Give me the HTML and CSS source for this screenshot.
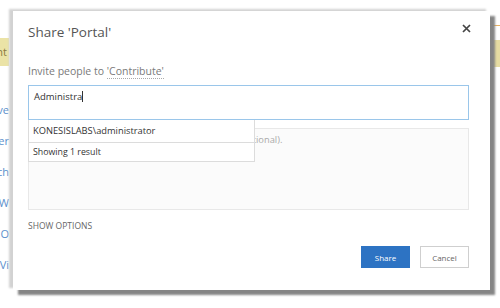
FILE: index.html
```html
<!DOCTYPE html>
<html lang="en">
<head>
    <meta charset="UTF-8">
    <title>Share 'Portal'</title>
    <link rel="stylesheet" href="styles.css">
</head>
<body>

    <div class="screen">
        <div class="page-strip left-strip">
            <div class="page-nav">
                <div class="status-bar">Content</div>
                <a href="#">Remove</a>
                <a href="#">Number</a>
                <a href="#">Search</a>
                <a href="#">New W</a>
                <a href="#">Site O</a>
                <a href="#">Vi</a>
            </div>
        </div>

        <div class="dialog">
            <div class="dialog-header">
                <h1>Share 'Portal'</h1>
                <span class="close">
                    <svg width="9" height="9" viewBox="0 0 9 9"><path d="M1 1 L8 8 M8 1 L1 8" stroke="#444" stroke-width="1.7" fill="none"/></svg>
                </span>
            </div>

            <p class="invite">Invite people to <span class="perm">'Contribute'</span></p>

            <div class="picker">
                <div class="people-input">Administra<span class="caret"></span></div>
                <ul class="suggestions">
                    <li class="match">KONESISLABS\administrator</li>
                    <li class="count">Showing 1 result</li>
                </ul>
                <div class="message">Include a personal message with this invitation (optional).</div>
            </div>

            <a class="show-options" href="#">SHOW OPTIONS</a>

            <div class="dialog-buttons">
                <button class="btn-share">Share</button>
                <button class="btn-cancel">Cancel</button>
            </div>
        </div>

        <div class="page-strip right-strip">
            <div class="top-line"></div>
            <div class="status-bar"></div>
        </div>
    </div>

</body>
</html>
```

FILE: styles.css
```css
body {
    margin: 0;
    padding: 0;
    background-color: #ffffff;
    font-family: "Open Sans", Arial, sans-serif;
}

.screen {
    display: flex;
    width: 500px;
    height: 308px;
    overflow: hidden;
}

.page-strip {
    flex: none;
    overflow: hidden;
}

.left-strip {
    width: 13px;
}

.page-nav {
    width: 80px;
    margin-left: -71px;
    padding-top: 38px;
    text-align: right;
    white-space: nowrap;
}

.page-nav .status-bar {
    background: #ebe3a6;
    color: #8a7a40;
    height: 28px;
    line-height: 28px;
    font-size: 11px;
    padding-right: 2px;
    margin-bottom: 37px;
}

.page-nav a {
    display: block;
    color: #5a8fcc;
    text-decoration: none;
    font-size: 11px;
    height: 31px;
    line-height: 14px;
}

.right-strip {
    width: 10px;
}

.right-strip .top-line {
    height: 1px;
    margin-top: 25px;
    background: #e8b060;
}

.right-strip .status-bar {
    height: 27px;
    margin-top: 14px;
    background: #e6dca2;
}

.dialog {
    flex: none;
    width: 477px;
    height: 279px;
    margin-top: 11px;
    padding: 12px 21px 0 15px;
    box-sizing: border-box;
    background: #ffffff;
    display: flex;
    flex-direction: column;
    box-shadow: -4px -2px 2px #d2d2d2, 5px 5px 2px #858585;
    position: relative;
    z-index: 1;
}

.dialog-header {
    display: flex;
    justify-content: space-between;
    align-items: flex-start;
}

.dialog-header h1 {
    margin: 0;
    font-size: 13.5px;
    line-height: 18px;
    font-weight: 400;
    color: #555;
}

.close {
    margin-top: 1px;
    margin-right: -2px;
    line-height: 0;
}

.invite {
    margin: 23px 0 7px;
    font-size: 10.5px;
    line-height: 14px;
    color: #7a7a7a;
}

.perm {
    border-bottom: 1px dotted #aaa;
}

.picker {
    position: relative;
}

.people-input {
    height: 35px;
    border: 1px solid #9ac6ea;
    box-sizing: border-box;
    padding: 4px 5px;
    font-size: 9.5px;
    line-height: 14px;
    color: #333;
}

.caret {
    display: inline-block;
    width: 1px;
    height: 11px;
    background: #333;
    vertical-align: -2px;
}

.suggestions {
    position: absolute;
    top: 35px;
    left: 0;
    width: 225px;
    margin: 0;
    padding: 0;
    list-style: none;
    background: #ffffff;
    border: 1px solid #dcdcdc;
    border-top: none;
    z-index: 2;
}

.suggestions li {
    padding: 0 4px;
    font-size: 9.3px;
    color: #333;
}

.suggestions .match {
    height: 22px;
    line-height: 22px;
    border-bottom: 1px solid #dcdcdc;
}

.suggestions .count {
    height: 18px;
    line-height: 18px;
    font-size: 8.8px;
}

.message {
    height: 82px;
    margin-top: 8px;
    border: 1px solid #e8e8e8;
    box-sizing: border-box;
    background: #fbfbfb;
    padding: 4px 5px;
    font-size: 9.3px;
    color: #aaa;
}

.show-options {
    margin-top: 10px;
    font-size: 8.5px;
    line-height: 11px;
    color: #666;
    text-decoration: none;
    align-self: flex-start;
}

.dialog-buttons {
    display: flex;
    justify-content: flex-end;
    gap: 10px;
    margin-top: 15px;
}

.dialog-buttons button {
    width: 49px;
    height: 22px;
    font-family: inherit;
    font-size: 8px;
    cursor: pointer;
    padding: 0;
}

.btn-share {
    background: #2d73c3;
    border: 1px solid #2d73c3;
    color: #ffffff;
}

.btn-cancel {
    background: #ffffff;
    border: 1px solid #cfcfcf;
    color: #666;
}
```
